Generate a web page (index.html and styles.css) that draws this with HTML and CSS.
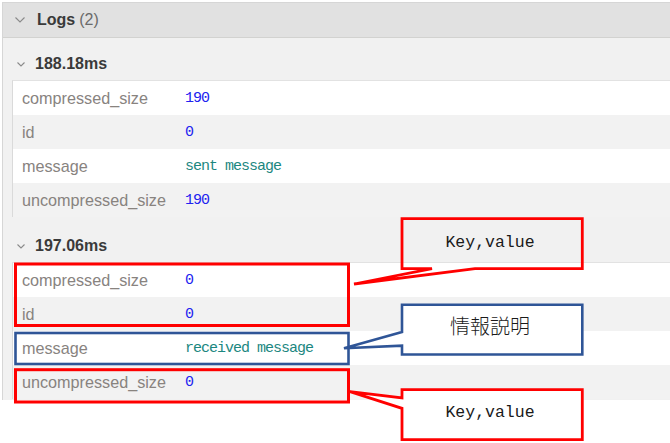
FILE: index.html
```html
<!DOCTYPE html>
<html lang="ja">
<head>
<meta charset="utf-8">
<title>Logs</title>
<link rel="stylesheet" href="styles.css">
</head>
<body>
<div class="logs">
  <div class="logs-header">
    <svg class="chev chev-lg" viewBox="0 0 10 6"><path d="M0.5 0.5 L5 5 L9.5 0.5"/></svg>
    <span class="title">Logs</span>
    <span class="count">(2)</span>
  </div>
  <div class="logs-body">
    <section class="entry">
      <div class="entry-head">
        <svg class="chev chev-sm" viewBox="0 0 8 5"><path d="M0.5 0.5 L4 4 L7.5 0.5"/></svg>
        <span>188.18ms</span>
      </div>
      <div class="kv">
        <div class="row"><span class="k">compressed_size</span><span class="v num">190</span></div>
        <div class="row"><span class="k">id</span><span class="v num">0</span></div>
        <div class="row"><span class="k">message</span><span class="v str">sent message</span></div>
        <div class="row"><span class="k">uncompressed_size</span><span class="v num">190</span></div>
      </div>
    </section>
    <section class="entry">
      <div class="entry-head">
        <svg class="chev chev-sm" viewBox="0 0 8 5"><path d="M0.5 0.5 L4 4 L7.5 0.5"/></svg>
        <span>197.06ms</span>
      </div>
      <div class="kv">
        <div class="row"><span class="k">compressed_size</span><span class="v num">0</span></div>
        <div class="row"><span class="k">id</span><span class="v num">0</span></div>
        <div class="row"><span class="k">message</span><span class="v str">received message</span></div>
        <div class="row"><span class="k">uncompressed_size</span><span class="v num">0</span></div>
      </div>
    </section>
  </div>
</div>

<svg class="annot" viewBox="0 0 670 443" width="670" height="443">
  <rect class="hl-red" x="15.5" y="264" width="333" height="61.5"/>
  <rect class="hl-blue" x="15.5" y="333" width="333" height="31"/>
  <rect class="hl-red" x="15.5" y="369.7" width="333" height="32.3"/>

  <path class="co-red co-open" d="M402 218.7 H582.3 V268.7 H475 L354 284 L432 268.7 H402 Z"/>
  <path class="co-blue" d="M402 304.7 H582.3 V354.5 H402 V345.7 L344 348.3 L402 332 Z"/>
  <path class="co-red" d="M402 389.7 H582.3 V439.7 H402 V408.3 L350 391.7 L402 398 Z"/>

  <text class="co-text" x="490" y="247">Key,value</text>
  <text class="co-text co-jp" x="490" y="333.5">情報説明</text>
  <text class="co-text" x="490" y="416.5">Key,value</text>
</svg>
</body>
</html>
```

FILE: styles.css
```css
html, body {
  margin: 0;
  padding: 0;
  background: #ffffff;
}

body {
  position: relative;
  width: 670px;
  height: 443px;
  overflow: hidden;
  font-family: "Liberation Sans", Arial, sans-serif;
}

.logs {
  margin: 2px 0 0 2px;
  border-top: 1px solid #d6d6d6;
  border-left: 1px solid #d6d6d6;
}

.logs-header {
  height: 34px;
  display: flex;
  align-items: center;
  padding-left: 12px;
  background: #e1e1e1;
  border-bottom: 1px solid #d2d2d0;
  font-size: 16px;
}

.chev {
  fill: none;
  stroke: #8a8a8a;
  stroke-width: 1.1;
  flex: none;
}

.chev-lg {
  width: 10px;
  height: 6px;
  margin-right: 12px;
}

.chev-sm {
  width: 8px;
  height: 5px;
  margin-left: 5px;
  margin-right: 10px;
}

.title {
  font-weight: bold;
  color: #3a3a3a;
}

.count {
  color: #6a6a6a;
  margin-left: 4px;
}

.logs-body {
  background: #f1f1f1;
  padding: 0 0 1px 9px;
}

.entry + .entry {
  margin-top: 3px;
}

.entry-head {
  display: flex;
  align-items: center;
  height: 20px;
  padding: 16px 0 6px;
  font-size: 16px;
  font-weight: bold;
  color: #3a3a3a;
}

.kv {
  border-top: 1px solid #e2e2e2;
  border-left: 1px solid #dadada;
}

.row {
  display: grid;
  grid-template-columns: 172px 1fr;
  align-items: center;
  height: 34px;
  background: #ffffff;
}

.row:nth-child(even) {
  background: #f2f2f2;
}

.k {
  padding-left: 9px;
  font-size: 16.2px;
  color: #88837f;
  white-space: nowrap;
}

.v {
  font-family: "Liberation Mono", "DejaVu Sans Mono", monospace;
  font-size: 15px;
  letter-spacing: -1px;
  white-space: nowrap;
}

.num {
  color: #2222f0;
}

.str {
  color: #1c877f;
}

.annot {
  position: absolute;
  left: 0;
  top: 0;
  pointer-events: none;
}

.hl-red {
  fill: none;
  stroke: #ff0000;
  stroke-width: 3;
}

.hl-blue {
  fill: none;
  stroke: #2f5597;
  stroke-width: 2.6;
}

.co-red {
  fill: #ffffff;
  stroke: #ff0000;
  stroke-width: 2.8;
  stroke-linejoin: miter;
}

.co-open {
  fill: none;
}

.co-blue {
  fill: #ffffff;
  stroke: #2f5597;
  stroke-width: 2.6;
}

.co-text {
  font-family: "Liberation Mono", monospace;
  font-size: 16.5px;
  fill: #1a1a1a;
  text-anchor: middle;
}

.co-jp {
  font-family: "Noto Sans CJK JP", sans-serif;
  font-size: 20px;
  font-weight: 300;
}
```
